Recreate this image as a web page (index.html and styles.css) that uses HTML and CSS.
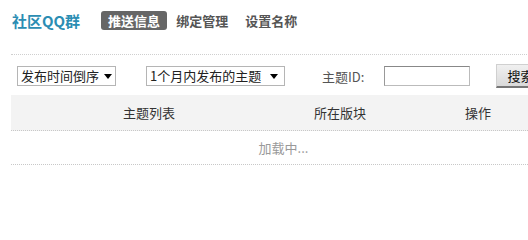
FILE: index.html
```html
<!DOCTYPE html>
<html lang="zh-CN">
<head>
<meta charset="utf-8">
<title>社区QQ群</title>
<link rel="stylesheet" href="styles.css">
</head>
<body>
<div class="page">
  <div class="top">
    <span class="brand">社区QQ群</span>
    <nav class="tabs">
      <a class="tab active">推送信息</a>
      <a class="tab">绑定管理</a>
      <a class="tab">设置名称</a>
    </nav>
  </div>
  <div class="toolbar">
    <div class="select sel-order">
      <select><option>发布时间倒序</option></select>
      <svg class="arrow" width="8" height="5" viewBox="0 0 8 5"><path d="M0 0H8L4 5Z" fill="#000"/></svg>
    </div>
    <div class="select sel-range">
      <select><option>1个月内发布的主题</option></select>
      <svg class="arrow" width="8" height="5" viewBox="0 0 8 5"><path d="M0 0H8L4 5Z" fill="#000"/></svg>
    </div>
    <label class="id-label">主题ID:</label>
    <input class="id-input" type="text">
    <button class="search-btn">搜索</button>
  </div>
  <div class="table">
    <div class="thead">
      <div class="th c1">主题列表</div>
      <div class="th c2">所在版块</div>
      <div class="th c3">操作</div>
    </div>
    <div class="loading">加载中...</div>
  </div>
</div>
</body>
</html>
```
FILE: styles.css
```css
html, body {
  margin: 0;
  padding: 0;
  overflow: hidden;
  background: #fff;
}
body {
  font-family: "Noto Sans CJK SC", "Noto Sans", sans-serif;
  font-size: 13px;
  color: #333;
}
.page {
  padding-left: 11px;
  width: 556px;
}
.top {
  display: flex;
  align-items: flex-start;
  padding-top: 11px;
  box-sizing: border-box;
  height: 55px;
  border-bottom: 1px dotted #cfcfcf;
}
.brand {
  font-size: 15px;
  font-weight: bold;
  color: #2b8db3;
  line-height: 19px;
  margin-left: 1px;
  margin-right: 21px;
}
.tabs {
  display: flex;
  align-items: center;
}
.tab {
  font-size: 13px;
  font-weight: bold;
  color: #555;
  line-height: 19px;
  padding: 0 6px;
  border-radius: 3px;
  margin-right: 5px;
}
.tab.active {
  background: #666;
  color: #fff;
  padding: 0 7px;
  margin-right: 3px;
}
.toolbar {
  display: flex;
  align-items: center;
  height: 24px;
  margin-top: 9px;
  padding-left: 6px;
}
.select {
  display: flex;
  align-items: center;
  height: 20px;
  box-sizing: border-box;
  border: 1px solid #b5b5b5;
  background: #fff;
}
.select select {
  appearance: none;
  -webkit-appearance: none;
  border: 0;
  background: transparent;
  font: inherit;
  font-size: 13px;
  color: #222;
  padding: 0 0 0 3px;
  height: 18px;
  line-height: 18px;
  flex: 1;
  outline: none;
}
.select .arrow {
  flex: none;
  margin: 0 6px 0 4px;
}
.sel-order { width: 99px; }
.sel-range { width: 139px; margin-left: 30px; }
.id-label {
  margin-left: 37px;
  color: #555;
  font-size: 13px;
}
.id-input {
  margin-left: 20px;
  width: 86px;
  height: 20px;
  box-sizing: border-box;
  border: 1px solid #bbb;
  border-top-color: #888;
  border-left-color: #999;
  padding: 0;
}
.search-btn {
  margin-left: 26px;
  width: 56px;
  height: 24px;
  box-sizing: border-box;
  font: inherit;
  font-size: 13px;
  color: #111;
  text-align: left;
  padding: 0 0 0 10px;
  border: 1px solid #d0d0d0;
  border-bottom: 2px solid #777;
  border-right-color: #999;
  background: linear-gradient(#f0f0f0, #dadada);
}
.table {
  margin-top: 7px;
  width: 545px;
}
.thead {
  display: grid;
  grid-template-columns: 276px 106px 1fr;
  height: 35px;
  align-items: center;
  background: #f3f3f3;
  border-bottom: 1px dotted #c8c8c8;
}
.th {
  font-size: 13px;
  color: #333;
}
.c1, .c2 { text-align: center; }
.c3 { padding-left: 72px; }
.loading {
  height: 33px;
  line-height: 33px;
  text-align: center;
  color: #999;
  border-bottom: 1px dotted #c8c8c8;
}
```
